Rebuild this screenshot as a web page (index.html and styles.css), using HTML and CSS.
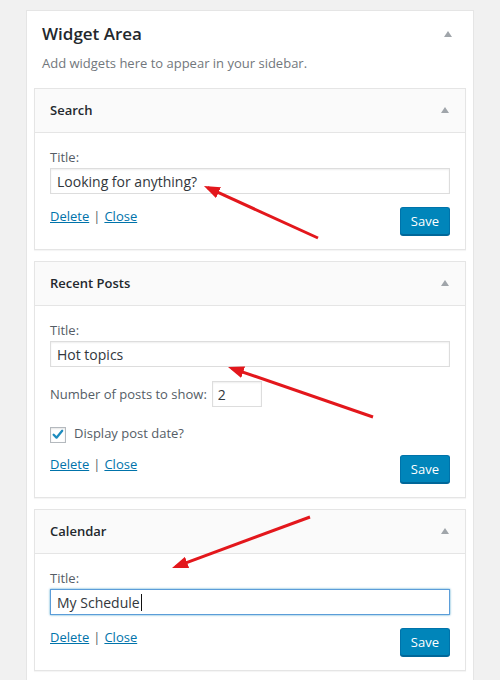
FILE: index.html
```html
<!DOCTYPE html>
<html lang="en">
<head>
<meta charset="utf-8">
<title>Widget Area</title>
<link rel="stylesheet" href="styles.css">
</head>
<body>
<div class="page">
  <div class="sidebar">
    <div class="sidebar-head">
      <h2 class="sidebar-title">Widget Area</h2>
      <span class="toggle"></span>
    </div>
    <p class="desc">Add widgets here to appear in your sidebar.</p>

    <div class="widgets">
      <div class="widget">
        <div class="widget-top">
          <h3 class="widget-title">Search</h3>
          <span class="toggle"></span>
        </div>
        <div class="widget-inside">
          <label class="label">Title:</label>
          <input class="text-input" type="text" value="Looking for anything?">
          <div class="actions">
            <div class="links"><a href="#">Delete</a><span class="sep">|</span><a href="#">Close</a></div>
            <button class="button">Save</button>
          </div>
        </div>
      </div>

      <div class="widget">
        <div class="widget-top">
          <h3 class="widget-title">Recent Posts</h3>
          <span class="toggle"></span>
        </div>
        <div class="widget-inside">
          <label class="label">Title:</label>
          <input class="text-input" type="text" value="Hot topics">
          <div class="number-row">
            <span class="row-label">Number of posts to show:</span>
            <input class="text-input number-input" type="text" value="2">
          </div>
          <div class="check-row">
            <span class="checkbox"><svg viewBox="0 0 16 16" width="15" height="15"><path d="M3 8.3 L6.3 11.6 L12.8 3.8" fill="none" stroke="#1e8cbe" stroke-width="2.6" stroke-linecap="round" stroke-linejoin="round"/></svg></span>
            <span class="row-label">Display post date?</span>
          </div>
          <div class="actions actions-tight">
            <div class="links"><a href="#">Delete</a><span class="sep">|</span><a href="#">Close</a></div>
            <button class="button">Save</button>
          </div>
        </div>
      </div>

      <div class="widget">
        <div class="widget-top">
          <h3 class="widget-title">Calendar</h3>
          <span class="toggle"></span>
        </div>
        <div class="widget-inside">
          <label class="label">Title:</label>
          <div class="text-input focus">My Schedule<span class="caret"></span></div>
          <div class="actions">
            <div class="links"><a href="#">Delete</a><span class="sep">|</span><a href="#">Close</a></div>
            <button class="button">Save</button>
          </div>
        </div>
      </div>
    </div>
  </div>

  <svg class="annotations" width="500" height="680" viewBox="0 0 500 680">
    <defs>
      <marker id="ah" markerWidth="17" markerHeight="12" refX="12" refY="6" orient="auto" markerUnits="userSpaceOnUse">
        <path d="M0 0 L16 6 L0 12 Z" fill="#e3171c"/>
      </marker>
    </defs>
    <line x1="318" y1="238" x2="207.6" y2="187.7" class="arrow" marker-end="url(#ah)"/>
    <line x1="373" y1="417" x2="231.8" y2="368.3" class="arrow" marker-end="url(#ah)"/>
    <line x1="310" y1="517" x2="175.8" y2="566.6" class="arrow" marker-end="url(#ah)"/>
  </svg>
</div>
</body>
</html>
```

FILE: styles.css
```css
body {
  margin: 0;
  background: #f1f1f1;
  font-family: "Open Sans", "Noto Sans", sans-serif;
  color: #444;
}

.page {
  position: relative;
  padding: 10px 0 0 26px;
}

.sidebar {
  width: 446px;
  border: 1px solid #e5e5e5;
  background: #fff;
  padding-bottom: 30px;
}

.sidebar-head {
  display: flex;
  align-items: center;
  justify-content: space-between;
  padding: 11px 21px 0 15px;
}

.sidebar-title {
  margin: 0;
  font-size: 17px;
  line-height: 24px;
  font-weight: 600;
  color: #23282d;
}

.toggle {
  width: 0;
  height: 0;
  border-left: 4px solid transparent;
  border-right: 4px solid transparent;
  border-bottom: 6px solid #a0a5aa;
}

.desc {
  margin: 8px 15px 0;
  font-size: 13px;
  line-height: 18px;
  color: #72777c;
}

.widgets {
  margin: 16px 7px 0;
  display: flex;
  flex-direction: column;
  gap: 11px;
}

.widget {
  border: 1px solid #e5e5e5;
  background: #fff;
  box-shadow: 0 1px 1px rgba(0, 0, 0, 0.04);
}

.widget-top {
  display: flex;
  align-items: center;
  justify-content: space-between;
  padding: 12px 16px 13px 15px;
  background: #fafafa;
  border-bottom: 1px solid #e5e5e5;
}

.widget-title {
  margin: 0;
  font-size: 13px;
  line-height: 18px;
  font-weight: 600;
  color: #23282d;
}

.widget-inside {
  padding: 15px 15px 14px;
}

.label {
  display: block;
  font-size: 13px;
  line-height: 18px;
  color: #555d66;
  margin-bottom: 2px;
}

.text-input {
  display: block;
  box-sizing: border-box;
  width: 100%;
  height: 26px;
  margin: 0;
  padding: 0 6px;
  border: 1px solid #ddd;
  box-shadow: inset 0 1px 2px rgba(0, 0, 0, 0.07);
  background: #fff;
  font-family: "Open Sans", "Noto Sans", sans-serif;
  font-size: 14px;
  color: #32373c;
  outline: none;
}

.text-input.focus {
  display: flex;
  align-items: center;
  border-color: #5b9dd9;
  box-shadow: 0 0 2px rgba(30, 140, 190, 0.8);
}

.caret {
  width: 1px;
  height: 17px;
  background: #111;
  margin-left: 1px;
}

.number-row {
  display: flex;
  align-items: center;
  gap: 5px;
  margin-top: 14px;
}

.row-label {
  font-size: 13px;
  line-height: 18px;
  color: #555d66;
}

.number-input {
  width: 50px;
  padding: 0 5px;
}

.check-row {
  display: flex;
  align-items: center;
  gap: 8px;
  height: 20px;
  margin-top: 16px;
}

.checkbox {
  box-sizing: border-box;
  width: 16px;
  height: 16px;
  border: 1px solid #b4b9be;
  background: #fff;
  box-shadow: inset 0 1px 2px rgba(0, 0, 0, 0.1);
  display: flex;
  align-items: center;
  justify-content: center;
  margin-top: 3px;
}

.actions {
  display: flex;
  justify-content: space-between;
  align-items: flex-start;
  margin-top: 13px;
}

.actions-tight {
  margin-top: 12px;
}

.links {
  font-size: 13px;
  line-height: 18px;
  color: #555d66;
}

.links a {
  color: #0073aa;
  text-decoration: underline;
}

.sep {
  margin: 0 4px;
}

.button {
  box-sizing: border-box;
  height: 28px;
  margin: 0;
  padding: 0 10px 1px;
  border: 1px solid #0073aa;
  border-bottom-color: #006799;
  border-radius: 3px;
  background: #0085ba;
  box-shadow: 0 1px 0 #006799;
  color: #fff;
  font-family: "Open Sans", "Noto Sans", sans-serif;
  font-size: 13px;
  line-height: 26px;
  cursor: pointer;
}

.annotations {
  position: absolute;
  top: 0;
  left: 0;
  pointer-events: none;
}

.arrow {
  stroke: #e3171c;
  stroke-width: 3;
}
```
